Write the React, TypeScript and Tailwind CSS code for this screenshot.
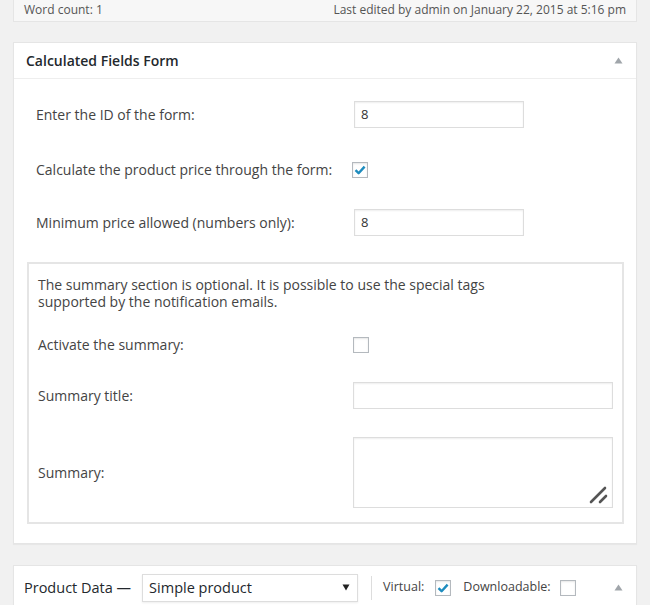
import React from 'react';

const FONT = "font-['Open_Sans',sans-serif]";

function Toggle() {
  return (
    <svg width="9" height="7" viewBox="0 0 9 7" className="shrink-0">
      <path d="M4.5 0.5 L8.5 6.5 L0.5 6.5 Z" fill="#a0a5aa" />
    </svg>
  );
}

function Checkbox({ checked }: { checked?: boolean }) {
  return (
    <span className="flex h-4 w-4 items-center justify-center border border-[#b4b9be] bg-white shadow-[inset_0_1px_2px_rgba(0,0,0,0.1)]">
      {checked && (
        <svg width="12" height="10" viewBox="0 0 12 10">
          <path d="M1.5 5.2 L4.6 8.2 L10.6 1.6" fill="none" stroke="#1e8cbe" strokeWidth="2.4" strokeLinejoin="round" />
        </svg>
      )}
    </span>
  );
}

function TextInput({ value, width }: { value?: string; width: string }) {
  return (
    <div
      className={`flex h-[27px] items-center border border-[#ddd] bg-white px-[6px] text-[13px] text-[#333] shadow-[inset_0_1px_2px_rgba(0,0,0,0.07)] ${width}`}
    >
      {value}
    </div>
  );
}

export default function App() {
  return (
    <div className={`${FONT} min-h-[605px] w-[650px] overflow-hidden bg-[#f1f1f1] text-[14px] text-[#444]`}>
      {/* word count bar */}
      <div className="mx-[13px] flex h-[22px] items-center justify-between border border-t-0 border-[#e5e5e5] bg-[#f7f7f7] px-[10px] pb-[2px] text-[12px] text-[#555]">
        <span>Word count: 1</span>
        <span>Last edited by admin on January 22, 2015 at 5:16 pm</span>
      </div>

      {/* Calculated Fields Form box */}
      <div className="mx-[13px] mt-[20px] border border-[#e5e5e5] bg-white shadow-[0_1px_1px_rgba(0,0,0,0.04)]">
        <div className="flex h-[36px] items-center justify-between border-b border-[#eee] pl-[12px] pr-[13px]">
          <span className="text-[14px] font-semibold text-[#23282d]">Calculated Fields Form</span>
          <Toggle />
        </div>

        <div className="pb-[19px] pl-[13px] pr-[12px] pt-[22px]">
          <div className="flex items-center pl-[9px]">
            <span className="w-[318px]">Enter the ID of the form:</span>
            <TextInput value="8" width="w-[170px]" />
          </div>

          <div className="mt-[31px] flex items-center pl-[9px]">
            <span className="w-[316px]">Calculate the product price through the form:</span>
            <Checkbox checked />
          </div>

          <div className="mt-[29px] flex items-center pl-[9px]">
            <span className="w-[318px]">Minimum price allowed (numbers only):</span>
            <TextInput value="8" width="w-[170px]" />
          </div>

          {/* summary section */}
          <div className="mt-[26px] border-2 border-[#e5e5e5] px-[9px] pb-[14px] pt-[12px]">
            <p className="w-[500px] leading-[17px]">
              The summary section is optional. It is possible to use the special tags supported by the notification emails.
            </p>

            <div className="mt-[24px] flex items-center">
              <span className="w-[315px]">Activate the summary:</span>
              <Checkbox />
            </div>

            <div className="mt-[27px] flex items-center">
              <span className="w-[318px]">Summary title:</span>
              <TextInput width="w-[262px]" />
            </div>

            <div className="mt-[28px] flex items-center">
              <span className="w-[317px]">Summary:</span>
              <div className="relative h-[71px] w-[261px] border border-[#ddd] bg-white shadow-[inset_0_1px_2px_rgba(0,0,0,0.07)]">
                <svg width="22" height="22" viewBox="0 0 22 22" className="absolute bottom-[2px] right-[2px]">
                  <path d="M3 19 L17 5" stroke="#555" strokeWidth="2.6" strokeLinecap="round" />
                  <path d="M12 19 L18 13" stroke="#555" strokeWidth="2.6" strokeLinecap="round" />
                </svg>
              </div>
            </div>
          </div>
        </div>
      </div>

      {/* Product Data box */}
      <div className="mx-[13px] mt-[21px] h-[60px] border border-[#e5e5e5] bg-white shadow-[0_1px_1px_rgba(0,0,0,0.04)]">
        <div className="flex h-[43px] items-center pl-[10px] pr-[13px]">
          <span className="text-[14.5px] text-[#23282d]">Product Data —</span>
          <div className="ml-[11px] flex h-[28px] w-[216px] items-center justify-between border border-[#ddd] bg-white pl-[6px] pr-[7px] text-[14.5px] text-[#23282d] shadow-[0_1px_2px_rgba(0,0,0,0.07)]">
            <span>Simple product</span>
            <svg width="8" height="7" viewBox="0 0 8 7">
              <path d="M0.5 0.5 L7.5 0.5 L4 6.5 Z" fill="#222" />
            </svg>
          </div>
          <span className="ml-[13px] h-[24px] w-px bg-[#ddd]" />
          <span className="ml-[11px] text-[12.5px]">Virtual:</span>
          <span className="ml-[11px]">
            <Checkbox checked />
          </span>
          <span className="ml-[12px] text-[12.5px]">Downloadable:</span>
          <span className="ml-[9px]">
            <Checkbox />
          </span>
          <span className="ml-auto">
            <Toggle />
          </span>
        </div>
      </div>
    </div>
  );
}
